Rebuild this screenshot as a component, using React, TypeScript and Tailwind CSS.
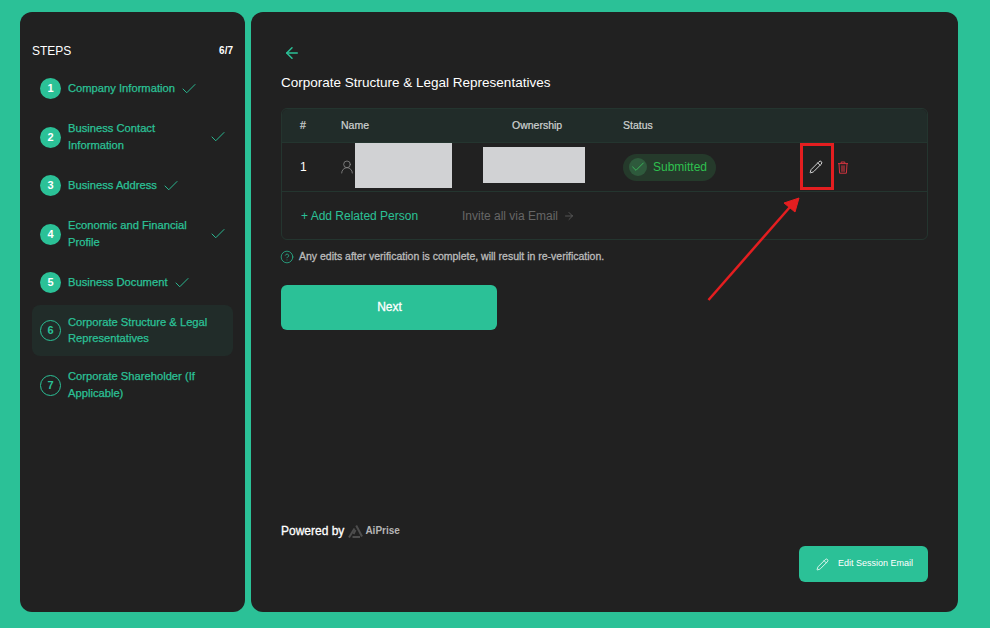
import { ArrowLeft, ArrowRight, Check, CircleHelp, Pencil, UserRound } from "lucide-react";

const steps = [
  { n: 1, label: "Company Information", done: true, wrap: false, row: "h-[33px]", line: "leading-[17px]" },
  { n: 2, label: "Business Contact Information", done: true, wrap: true, row: "h-[50px]", line: "leading-[17px]" },
  { n: 3, label: "Business Address", done: true, wrap: false, row: "h-[33px]", line: "leading-[17px]" },
  { n: 4, label: "Economic and Financial Profile", done: true, wrap: true, row: "h-[50px]", line: "leading-[17px]" },
  { n: 5, label: "Business Document", done: true, wrap: false, row: "h-[33px]", line: "leading-[17px]" },
  { n: 6, label: "Corporate Structure & Legal Representatives", done: false, wrap: true, row: "h-[51px] -mt-px bg-[#212c29] rounded-lg", line: "leading-4 -mt-[2px]" },
  { n: 7, label: "Corporate Shareholder (If Applicable)", done: false, wrap: true, row: "h-[50px] -mt-[3px]", line: "leading-[17px]" },
];

const StepRow = ({ step }: { step: (typeof steps)[number] }) => (
  <div className={`flex items-center pl-2 ${step.row}`}>
    <div
      className={`w-[21px] h-[21px] shrink-0 rounded-full flex items-center justify-center text-[11px] font-bold ${
        step.done ? "bg-[#2bc197] text-white" : "border border-[#2bc197] text-[#2bc197]"
      }`}
    >
      {step.n}
    </div>
    <div className={`ml-[7px] text-[11.2px] [-webkit-text-stroke:0.25px_#2bc197] text-[#2bc197] ${step.line} ${step.wrap ? "w-[144px]" : ""}`}>
      {step.label}
    </div>
    {step.done && (
      <Check className={`w-[18px] h-[18px] text-[#2bc197] ${step.wrap ? "-ml-[3px]" : "ml-[5px]"}`} strokeWidth={1.25} />
    )}
  </div>
);

const Sidebar = () => (
  <aside className="w-[225px] h-[600px] rounded-xl bg-[#212121] px-3 pt-8">
    <div className="flex items-center justify-between h-[13px] text-white text-xs">
      <span>STEPS</span>
      <span className="text-[10px] font-bold">6/7</span>
    </div>
    <div className="flex flex-col gap-[7px] mt-[15px]">
      {steps.map((step) => (
        <StepRow key={step.n} step={step} />
      ))}
    </div>
  </aside>
);

const TrashIcon = () => (
  <svg width="12" height="13" viewBox="0 0 12 13" className="text-[#d2343f]">
    <path d="M1 2.6h10M4.2 2.4V1h3.6v1.4" fill="none" stroke="currentColor" strokeWidth="1" />
    <path d="M2 2.8l.6 9.4h6.8l.6-9.4" fill="none" stroke="currentColor" strokeWidth="1" />
    <rect x="4" y="4.4" width="4" height="6.4" fill="currentColor" opacity="0.55" />
  </svg>
);

const PeopleTable = () => (
  <div className="mt-[16px] h-[132px] rounded-md border border-[#24352f] text-[10.5px]">
    <div className="h-[34px] grid grid-cols-[59px_171px_111px_1fr] items-center bg-[#212c29] rounded-t-md border-b border-[#24352f] text-[#cfd3d2] [-webkit-text-stroke:0.2px_#cfd3d2]">
      <span className="pl-[18px]">#</span>
      <span>Name</span>
      <span>Ownership</span>
      <span>Status</span>
    </div>
    <div className="h-[49px] grid grid-cols-[59px_141px_141px_177px_1fr] border-b border-[#24352f]">
      <span className="pl-[18px] self-center text-xs text-white">1</span>
      <div className="flex items-start">
        <UserRound className="w-4 h-4 -ml-[2px] mt-[16px] text-[#888]" strokeWidth={1.25} />
        <div className="w-[97px] h-[45px] bg-[#d1d2d4]" />
      </div>
      <div className="pt-1">
        <div className="w-[102px] h-9 ml-px bg-[#d1d2d4]" />
      </div>
      <div className="self-center">
        <div className="w-[93px] h-[27px] rounded-full bg-[#253a2b] flex items-center pl-[6px] text-xs text-[#2fc04f]">
          <span className="w-[18px] h-[18px] rounded-full bg-[#2e5a3c] flex items-center justify-center mr-[6px]">
            <Check className="w-4 h-4 text-[#3cc75f]" strokeWidth={1.25} />
          </span>
          Submitted
        </div>
      </div>
      <div className="relative flex items-center">
        <div className="absolute left-0 top-0 w-[34px] h-[47px] border-[3px] border-[#e41e20]" />
        <Pencil className="w-[14px] h-[14px] ml-[9px] text-[#eeeeee]" strokeWidth={1.5} />
        <span className="ml-[14px]">
          <TrashIcon />
        </span>
      </div>
    </div>
    <div className="h-[47px] flex items-center pl-[19px] text-xs">
      <span className="text-[#2bc197] w-[161px]">+ Add Related Person</span>
      <span className="text-[#666] flex items-center">
        Invite all via Email
        <ArrowRight className="w-3 h-3 ml-[5px]" strokeWidth={1.5} />
      </span>
    </div>
  </div>
);

const AiPriseLogo = () => (
  <svg width="15" height="15" viewBox="0 0 15 15" fill="none" stroke="#4d4d4d" strokeWidth="2">
    <path d="M1 13.5 L6.5 4.5" />
    <path d="M8.2 1.5 L14 12.5" />
    <path d="M4.5 13 H12" />
    <path d="M7.5 6 L5.5 10" />
  </svg>
);

const AnnotationArrow = () => (
  <svg className="absolute left-0 top-0 pointer-events-none" width="707" height="600" fill="none">
    <path d="M457.5 288 L539 195" stroke="#e41e20" strokeWidth="2.5" />
    <path d="M548 186 L533 191 L544 200 Z" fill="#e41e20" stroke="#e41e20" />
  </svg>
);

export default function App() {
  return (
    <div className="w-[990px] h-[628px] bg-[#2bc197] flex gap-[6px] pl-5 pt-3 font-['Liberation_Sans',Arial,sans-serif] overflow-hidden">
      <Sidebar />
      <main className="relative w-[707px] h-[600px] rounded-xl bg-[#212121] px-[30px] pt-[32px] flex flex-col">
        <ArrowLeft className="w-[18px] h-[18px] ml-[2px] text-[#2bc197]" strokeWidth={2} />
        <h1 className="mt-[12px] text-[13.5px] leading-[18px] text-white">Corporate Structure &amp; Legal Representatives</h1>
        <PeopleTable />
        <div className="mt-[10px] flex items-center h-[14px] text-[10.5px] [-webkit-text-stroke:0.3px_#bcbcbc] text-[#bcbcbc]">
          <CircleHelp className="w-[14px] h-[14px] -ml-px mr-[5px] text-[#2bc197]" strokeWidth={1.25} />
          Any edits after verification is complete, will result in re-verification.
        </div>
        <button className="mt-[21px] w-[216px] h-[45px] pl-px pb-px rounded-md bg-[#2bc197] text-white text-xs [-webkit-text-stroke:0.3px_#ffffff]">Next</button>
        <div className="mt-auto mb-[73px] flex items-center text-xs [-webkit-text-stroke:0.3px_#ffffff] text-white">
          Powered by
          <span className="ml-1 mr-[2px]">
            <AiPriseLogo />
          </span>
          <span className="text-[#b5b5b5] text-[10px] font-bold [-webkit-text-stroke:0]">AiPrise</span>
        </div>
        <button className="absolute right-[30px] bottom-[30px] w-[129px] h-9 rounded-md bg-[#2bc197] flex items-center pl-[17px] text-[9px] font-medium text-white">
          <Pencil className="w-[13px] h-[13px] mr-[9px]" strokeWidth={1.5} />
          Edit Session Email
        </button>
        <AnnotationArrow />
      </main>
    </div>
  );
}
